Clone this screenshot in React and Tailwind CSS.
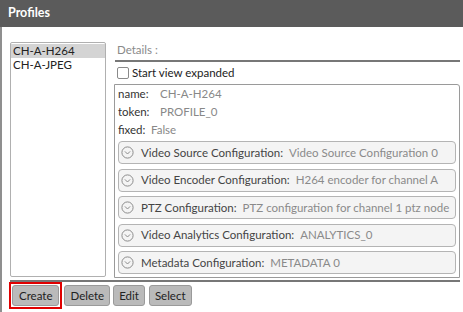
import React from "react";

function Chevron() {
  return (
    <svg width="13" height="13" viewBox="0 0 13 13" className="shrink-0">
      <circle cx="6.5" cy="6.5" r="5.6" fill="none" stroke="#8c8c8c" strokeWidth="1" />
      <path d="M3.9 5.4 L6.5 8 L9.1 5.4" fill="none" stroke="#8c8c8c" strokeWidth="1" />
    </svg>
  );
}

const sections = [
  ["Video Source Configuration:", "Video Source Configuration 0"],
  ["Video Encoder Configuration:", "H264 encoder for channel A"],
  ["PTZ Configuration:", "PTZ configuration for channel 1 ptz node"],
  ["Video Analytics Configuration:", "ANALYTICS_0"],
  ["Metadata Configuration:", "METADATA 0"],
];

export default function App() {
  return (
    <div
      className="w-[463px] h-[312px] bg-white overflow-hidden text-[11.5px] text-[#333]"
      style={{ fontFamily: "Lato, 'Liberation Sans', sans-serif" }}
    >
      <div className="h-[27px] bg-[#5b5b5b] flex items-center pl-[8px] text-white font-bold text-[12.5px]">
        Profiles
      </div>
      <div className="h-[285px] border-l-2 border-[#8f8f8f] pl-[8px] pr-[3px] pt-[15px] flex flex-col">
        <div className="flex gap-[8px]">
          <div className="w-[96px] h-[235px] border border-[#b0b0b0] rounded-[2px] pt-[1px] flex flex-col">
            <div className="h-[14px] bg-[#d4d4d4] pl-[2px] leading-[14px] text-[#222]">CH-A-H264</div>
            <div className="h-[14px] pl-[2px] leading-[14px] text-[#222]">CH-A-JPEG</div>
          </div>
          <div className="w-[346px] flex flex-col">
            <div className="h-[16px] pl-[3px] leading-[16px] text-[#8a8a8a]">Details :</div>
            <div className="ml-[1px] border-t-2 border-[#777] mt-[2px]"></div>
            <div className="h-[22px] flex items-center gap-[3px] pl-[3px] text-[#222]">
              <div className="w-[12px] h-[12px] border border-[#8a8a8a] rounded-[2px] bg-white"></div>
              <span>Start view expanded</span>
            </div>
            <div className="h-[194px] border border-[#9a9a9a] rounded-tr-[3px] pl-[3px] pr-[3px] flex flex-col">
              <div className="h-[18px] flex items-center">
                <span className="w-[42px] text-[#333]">name:</span>
                <span className="text-[#888]">CH-A-H264</span>
              </div>
              <div className="h-[18px] flex items-center">
                <span className="w-[42px] text-[#333]">token:</span>
                <span className="text-[#888]">PROFILE_0</span>
              </div>
              <div className="h-[18px] flex items-center">
                <span className="w-[33px] text-[#333]">fixed:</span>
                <span className="text-[#888]">False</span>
              </div>
              <div className="flex flex-col gap-[4.5px] mt-[2px]">
                {sections.map(([label, value]) => (
                  <div
                    key={label}
                    className="h-[23px] border border-[#b4b4b4] rounded-[4px] bg-[#f4f4f4] flex items-center pl-[2px] whitespace-nowrap"
                  >
                    <Chevron />
                    <span className="ml-[7px] text-[#444]">{label}</span>
                    <span className="ml-[6px] text-[#8a8a8a]">{value}</span>
                  </div>
                ))}
              </div>
            </div>
          </div>
        </div>
        <div className="mt-[2px] border-t-2 border-[#777] w-[450px]"></div>
        <div className="flex items-center -ml-[1px]">
          <div className="border-2 border-[#e00000] p-[1px] flex">
            <button className="h-[21px] px-[6px] bg-[#bababa] border border-[#9a9a9a] rounded-[3px] text-[#222] leading-none">Create</button>
          </div>
          <button className="ml-[2px] h-[21px] px-[5px] bg-[#bababa] border border-[#9a9a9a] rounded-[3px] text-[#222] leading-none">Delete</button>
          <button className="ml-[3px] h-[21px] px-[5px] bg-[#bababa] border border-[#9a9a9a] rounded-[3px] text-[#222] leading-none">Edit</button>
          <button className="ml-[4px] h-[21px] px-[5px] bg-[#bababa] border border-[#9a9a9a] rounded-[3px] text-[#222] leading-none">Select</button>
        </div>
      </div>
    </div>
  );
}
